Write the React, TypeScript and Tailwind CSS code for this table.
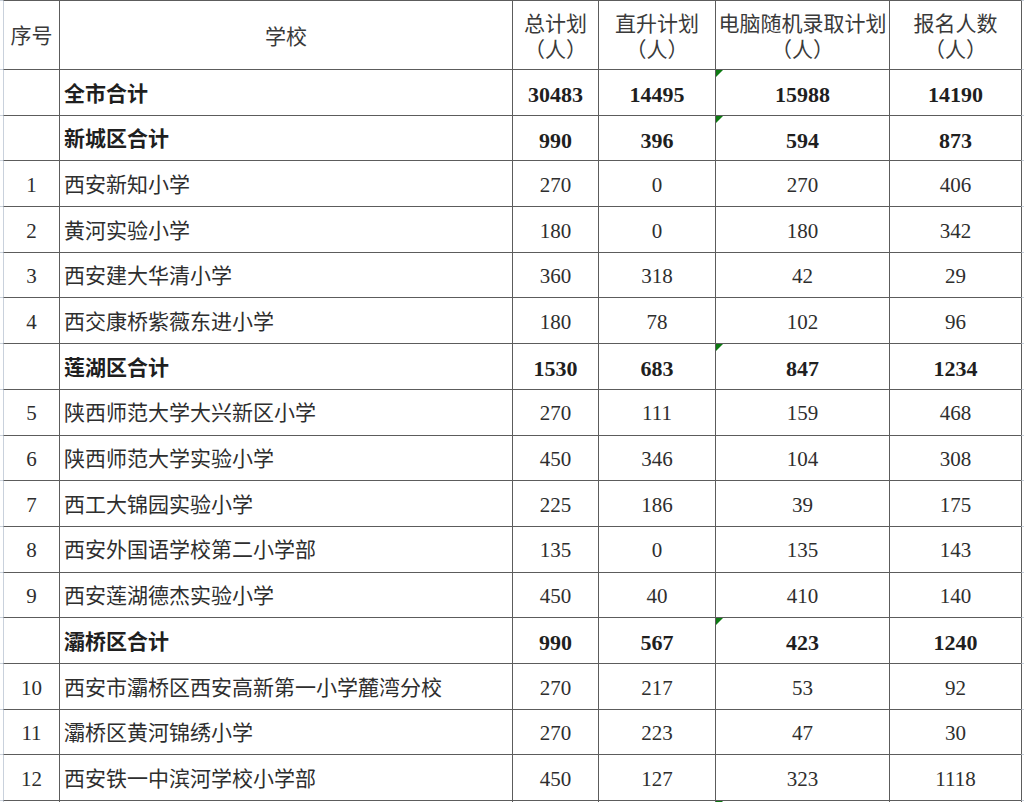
import React from 'react'

type Row = {
  no?: string
  name?: string
  vals?: string[]
  total?: boolean
  mark?: boolean
}

// subtotal rows carry the little green "number stored as text" marker in the 电脑 column
const rows: Row[] = [
  { name: '全市合计', vals: ['30483', '14495', '15988', '14190'], total: true, mark: true },
  { name: '新城区合计', vals: ['990', '396', '594', '873'], total: true, mark: true },
  { no: '1', name: '西安新知小学', vals: ['270', '0', '270', '406'] },
  { no: '2', name: '黄河实验小学', vals: ['180', '0', '180', '342'] },
  { no: '3', name: '西安建大华清小学', vals: ['360', '318', '42', '29'] },
  { no: '4', name: '西交康桥紫薇东进小学', vals: ['180', '78', '102', '96'] },
  { name: '莲湖区合计', vals: ['1530', '683', '847', '1234'], total: true, mark: true },
  { no: '5', name: '陕西师范大学大兴新区小学', vals: ['270', '111', '159', '468'] },
  { no: '6', name: '陕西师范大学实验小学', vals: ['450', '346', '104', '308'] },
  { no: '7', name: '西工大锦园实验小学', vals: ['225', '186', '39', '175'] },
  { no: '8', name: '西安外国语学校第二小学部', vals: ['135', '0', '135', '143'] },
  { no: '9', name: '西安莲湖德杰实验小学', vals: ['450', '40', '410', '140'] },
  { name: '灞桥区合计', vals: ['990', '567', '423', '1240'], total: true, mark: true },
  { no: '10', name: '西安市灞桥区西安高新第一小学麓湾分校', vals: ['270', '217', '53', '92'] },
  { no: '11', name: '灞桥区黄河锦绣小学', vals: ['270', '223', '47', '30'] },
  { no: '12', name: '西安铁一中滨河学校小学部', vals: ['450', '127', '323', '1118'] },
  { total: true, mark: true },
]

const line = 'border-[#5c5c5c]'

function Marker() {
  return (
    <span className="absolute top-0 left-0 w-0 h-0 border-t-[7px] border-t-[#0d7a12] border-r-[7px] border-r-transparent" />
  )
}

function HeaderCell({ top, bottom }: { top: string; bottom?: string }) {
  return (
    <div className={`flex flex-col items-center justify-center pt-[3px] border-l border-t ${line} text-[#3a3a3a] leading-[26px]`}>
      <span>{top}</span>
      {bottom && <span>{bottom}</span>}
    </div>
  )
}

export default function App() {
  return (
    <div
      className="w-[1024px] h-[802px] overflow-hidden bg-white text-[21px] text-[#2e2e2e]"
      style={{ fontFamily: '"Liberation Serif", "Noto Sans CJK SC", serif' }}
    >
      <div className="grid grid-cols-[3px_56px_453px_86px_117px_174px_132px_3px] grid-rows-[69px_repeat(17,45.7px)]">
        {/* header */}
        <div className="border-t border-[#c9d1dc]" />
        <div className={`flex items-center justify-center pt-[3px] border-l border-l-[#c9d1dc] border-t ${line} text-[#3a3a3a]`}>序号</div>
        <HeaderCell top="学校" />
        <HeaderCell top="总计划" bottom="（人）" />
        <HeaderCell top="直升计划" bottom="（人）" />
        <HeaderCell top="电脑随机录取计划" bottom="（人）" />
        <HeaderCell top="报名人数" bottom="（人）" />
        <div className={`border-l border-t ${line} border-t-[#c9d1dc]`} />

        {rows.map((r, i) => (
          <React.Fragment key={i}>
            <div className="border-t border-[#c9d1dc]" />
            <div className={`flex items-center justify-center pt-[4px] border-l border-l-[#c9d1dc] border-t ${line}`}>{r.no}</div>
            <div className={`flex items-center pl-[4px] pt-[4px] border-l border-t ${line} ${r.total ? 'font-bold text-[#1f1f1f]' : ''}`}>
              {r.name}
            </div>
            {[0, 1, 2, 3].map(j => (
              <div
                key={j}
                className={`relative flex items-center justify-center pt-[4px] border-l border-t ${line} ${r.total ? 'font-bold text-[22px] text-[#1f1f1f]' : ''}`}
              >
                {j === 2 && r.mark && <Marker />}
                {r.vals?.[j]}
              </div>
            ))}
            <div className={`border-l border-t ${line} border-t-[#c9d1dc]`} />
          </React.Fragment>
        ))}
      </div>
    </div>
  )
}
